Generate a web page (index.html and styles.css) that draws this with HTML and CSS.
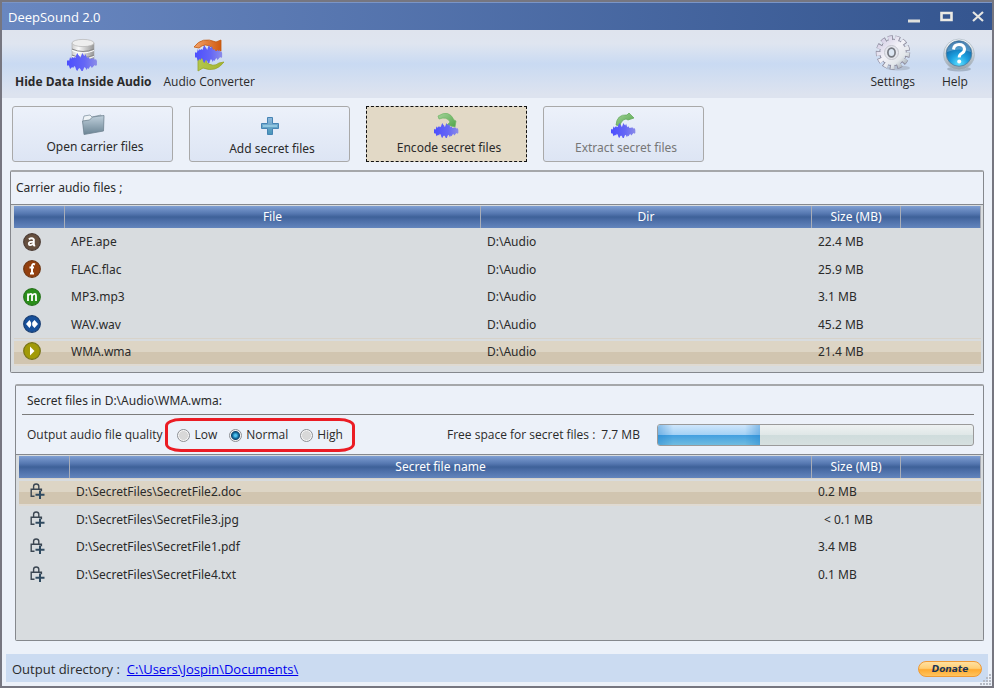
FILE: index.html
```html
<!DOCTYPE html>
<html lang="en">
<head>
<meta charset="utf-8">
<title>DeepSound 2.0</title>
<link rel="stylesheet" href="styles.css">
</head>
<body>
<svg class="defs" width="0" height="0" aria-hidden="true">
  <defs>
    <linearGradient id="gWave"><stop offset="0" stop-color="#4a4dff"/><stop offset=".6" stop-color="#6567f5"/><stop offset="1" stop-color="#8b8ce8"/></linearGradient>
    <linearGradient id="gMetal"><stop offset="0" stop-color="#d0d0d0"/><stop offset=".3" stop-color="#fafafa"/><stop offset="1" stop-color="#969696"/></linearGradient>
    <linearGradient id="gOrange"><stop offset="0" stop-color="#f3a269"/><stop offset="1" stop-color="#d05a10"/></linearGradient>
    <linearGradient id="gLime"><stop offset="0" stop-color="#b2c64d"/><stop offset="1" stop-color="#a5b52c"/></linearGradient>
    <linearGradient id="gGreen" x1="0" y1="0" x2="1" y2="1"><stop offset="0" stop-color="#a5d39a"/><stop offset="1" stop-color="#4fa548"/></linearGradient>
    <linearGradient id="gFolder" x1="0" y1="0" x2="0" y2="1"><stop offset="0" stop-color="#c0d0dc"/><stop offset="1" stop-color="#6b8494"/></linearGradient>
    <linearGradient id="gGear" gradientUnits="userSpaceOnUse" x1="4" y1="4" x2="30" y2="34"><stop offset="0" stop-color="#cfc8e2"/><stop offset=".45" stop-color="#f3f2f8"/><stop offset=".75" stop-color="#e2e6ea"/><stop offset="1" stop-color="#98a2ab"/></linearGradient>
    <linearGradient id="gRing" x1="0" y1="0" x2="0" y2="1"><stop offset="0" stop-color="#ffffff"/><stop offset="1" stop-color="#93a0ab"/></linearGradient>
    <linearGradient id="gPlus" x1="0" y1="0" x2="0" y2="1"><stop offset="0" stop-color="#8fb8dc"/><stop offset="1" stop-color="#4795b8"/></linearGradient>
    <radialGradient id="gHelp" cx=".5" cy=".9" r=".8"><stop offset="0" stop-color="#5fe0ff"/><stop offset=".45" stop-color="#1ba0e0"/><stop offset="1" stop-color="#115c9c"/></radialGradient>
    <symbol id="wave" viewBox="0 0 31 18" preserveAspectRatio="none"><path fill="url(#gWave)" d="M0 8l1-1 1 1 1-4 1 2 1-2 1 1 1-1 1 1 1-3 1-2 1 2 1 1 1 2 1-3 1-2 1 2 1 1 1-2 1 3 1 1 1-1 1 2 1 0 1-1 1 1 1-1 1 2 1-1 1 2v4l-1 1-1-1-1 1-1 1-1 1-1-2-1 1-1 2-1-1-1 2-1-2-1-1-1 2-1 3-1-1-1-2-1-1-1 1-1 2-1-1-1-3-1-1-1 2-1-1-1 1-1 1-1-3-1-1-1 1-1-2z"/></symbol>
    <symbol id="lock" viewBox="0 0 15 17"><path fill="none" stroke="#3b4652" stroke-width="1.4" d="M4.500 13.300H1.200V6.200h10.200v2M3.600 6V3.200Q3.600 1 6.200 1T8.800 3.200V6"/><path stroke="#2f4a60" stroke-width="2" d="M10 7.500v8.500M5.500 11.700h9"/></symbol>
  </defs>
</svg>
<div class="window">
  <header class="titlebar">
    <h1 class="title">DeepSound 2.0</h1>
    <div class="controls">
      <button class="ctl" aria-label="Minimize"><svg width="14" height="14"><path d="M1 11h12" stroke="#dfe0dc" stroke-width="3"/></svg></button>
      <button class="ctl" aria-label="Maximize"><svg width="14" height="14"><path d="M2.500 3h10v7h-10z" fill="none" stroke="#eceae4" stroke-width="2.600"/></svg></button>
      <button class="ctl" aria-label="Close"><svg width="14" height="14"><path d="M2 2l10 9M12 2L2 11" stroke="#e6e6e2" stroke-width="2.200"/></svg></button>
    </div>
  </header>

  <nav class="toolbar">
    <button class="tool current">
      <svg width="32" height="34" viewBox="0 0 32 34"><path fill="url(#gMetal)" stroke="#aaa" stroke-width=".6" d="M5 5v20q11 5 22 0V5z"/><ellipse cx="16" cy="5" rx="11" ry="3.600" fill="#eee" stroke="#b5b5b5" stroke-width=".7"/><path fill="none" stroke="#8a8a8a" d="M5 11q11 5 22 0M5 17q11 5 22 0"/><path fill="none" stroke="#fff" d="M5 12.500q11 5 22 0M5 18.500q11 5 22 0"/><use href="#wave" x="0" y="15" width="32" height="18"/></svg>
      <span>Hide Data Inside Audio</span>
    </button>
    <button class="tool">
      <svg width="32" height="34" viewBox="0 0 32 34"><path fill="url(#gOrange)" stroke="#c2590f" stroke-width=".8" d="M1 9Q9-2 23 4l5-2v11H17l3-3Q12 4 6 10z"/><path fill="url(#gLime)" stroke="#97a52c" stroke-width=".8" d="M31 24Q23 35 10 30l-5 3V20h11l-3 4q7 6 13 1z"/><use href="#wave" x="2" y="7" width="29" height="18"/></svg>
      <span>Audio Converter</span>
    </button>
    <span class="spacer"></span>
    <button class="tool">
      <svg width="36" height="38" viewBox="0 0 36 38"><ellipse cx="23" cy="34" rx="12" ry="2.500" fill="#a8b4c4" opacity=".7"/><circle cx="18" cy="18.500" r="14.200" fill="none" stroke="#8e8c9e" stroke-width="6" stroke-dasharray="4.600 2.263"/><circle cx="18" cy="18.500" r="13.400" fill="none" stroke="#8e8c9e" stroke-width="1"/><circle cx="18" cy="18.500" r="13.600" fill="none" stroke="url(#gGear)" stroke-width="6" stroke-dasharray="3.600 2.973"/><circle cx="18" cy="18.500" r="12.500" fill="url(#gGear)"/><circle cx="16.500" cy="18.500" r="7" fill="#e6e7ee" stroke="#c4c5ce"/><ellipse cx="16.500" cy="18.500" rx="3.600" ry="4.400" fill="#dce6f3" stroke="#777a82" stroke-width="1.700"/></svg>
      <span>Settings</span>
    </button>
    <button class="tool help">
      <svg width="34" height="34" viewBox="0 0 34 34"><ellipse cx="17" cy="31" rx="12" ry="2.500" fill="#8898a8" opacity=".6"/><circle cx="17" cy="16.500" r="15.500" fill="url(#gRing)" stroke="#b0bdc8" stroke-width=".8"/><circle cx="17" cy="15.500" r="12.800" fill="url(#gHelp)" stroke="#567d9c" stroke-width=".8"/><path d="M5 14Q6 4 17 3.500T29 14Q17 9 5 14" fill="#fff" opacity=".25"/><path d="M11.500 11.500Q12 6.500 17 6.500T22.500 11q0 3-3 4.500-2.300 1.200-2.300 4" fill="none" stroke="#fff" stroke-width="3"/><circle cx="17.200" cy="23.500" r="2" fill="#fff"/></svg>
      <span>Help</span>
    </button>
  </nav>

  <div class="actions">
    <button class="action">
      <svg width="24" height="24" viewBox="0 0 24 24"><path fill="#eef3f6" stroke="#8596a3" stroke-width=".8" d="M2 7l1-4 6-1 2 2 9-2 1 4-4 10H3z"/><path fill="url(#gFolder)" stroke="#6f8390" stroke-width=".8" d="M1.500 8l7-1 3-3L23 2.500 22.500 18 3 21.500z"/></svg>
      <span>Open carrier files</span>
    </button>
    <button class="action add">
      <svg width="24" height="24" viewBox="0 0 24 24"><path fill="url(#gPlus)" stroke="#4584b4" d="M9.500 2.500h5v6h6v5h-6v6h-5v-6h-6v-5h6z"/><path stroke="#9cd2e8" stroke-width="1.500" d="M5 11h14"/></svg>
      <span>Add secret files</span>
    </button>
    <button class="action active">
      <svg width="26" height="26" viewBox="0 0 26 26"><path fill="url(#gGreen)" stroke="#6db464" stroke-width=".7" d="M4 4Q15-3 20 8l2 1-1 6-8-2 3-3Q13 4 5 7z"/><use href="#wave" x="0" y="11" width="26" height="15"/></svg>
      <span>Encode secret files</span>
    </button>
    <button class="action" disabled>
      <svg width="26" height="26" viewBox="0 0 26 26"><path fill="url(#gGreen)" stroke="#5ba553" stroke-width=".7" d="M5 13Q6 2 16 3l2-2 5 5-6 2-2-1Q10 8 9 14z"/><use href="#wave" x="0" y="11" width="26" height="15"/></svg>
      <span>Extract secret files</span>
    </button>
  </div>

  <section class="panel carriers">
    <h2 class="caption">Carrier audio files ;</h2>
    <div class="list">
      <table>
        <colgroup><col class="c-icon"><col><col class="c-dir"><col class="c-size"><col class="c-end"></colgroup>
        <thead><tr><th></th><th>File</th><th>Dir</th><th>Size (MB)</th><th></th></tr></thead>
        <tbody>
          <tr><td><svg width="18" height="18"><circle cx="9" cy="9" r="8.300" fill="#66503f" stroke="#4b3b33" stroke-width="1.200"/><path d="M5.800 6.300q3-2 5 0V12q.2.700 1.400.4M10.500 8.600Q5.500 8.500 5.800 11t5-.5" fill="none" stroke="#fff" stroke-width="1.900"/></svg></td><td>APE.ape</td><td>D:\Audio</td><td>22.4 MB</td><td></td></tr>
          <tr><td><svg width="18" height="18"><circle cx="9" cy="9" r="8.300" fill="#93400f" stroke="#6e3511" stroke-width="1.200"/><path d="M12 4.500Q9 3 9 6.500V14M6.500 7.500h4.500M7 13.500h4" fill="none" stroke="#fff" stroke-width="2"/></svg></td><td>FLAC.flac</td><td>D:\Audio</td><td>25.9 MB</td><td></td></tr>
          <tr><td><svg width="18" height="18"><circle cx="9" cy="9" r="8.300" fill="#2b8f1a" stroke="#247219" stroke-width="1.200"/><path d="M5 13V5.500M5 7.500Q9 4 9 8v5M9 7.500Q13 4 13 8v5" fill="none" stroke="#fff" stroke-width="1.800"/></svg></td><td>MP3.mp3</td><td>D:\Audio</td><td>3.1 MB</td><td></td></tr>
          <tr><td><svg width="18" height="18"><circle cx="9" cy="9" r="8.300" fill="#17509a" stroke="#173c70" stroke-width="1.200"/><path d="M3 9l3.500-4 2 3.200L11.500 5 15 9l-3.500 4-3-3.200L6.500 13z" fill="#fff"/><path d="M8.700 7v4" stroke="#17509a"/></svg></td><td>WAV.wav</td><td>D:\Audio</td><td>45.2 MB</td><td></td></tr>
          <tr class="selected"><td><svg width="18" height="18"><circle cx="9" cy="9" r="8.300" fill="#a29a08" stroke="#767316" stroke-width="1.200"/><path d="M7 4.500l4.500 4.500L7 13.500z" fill="#fff"/></svg></td><td>WMA.wma</td><td>D:\Audio</td><td>21.4 MB</td><td></td></tr>
        </tbody>
      </table>
    </div>
  </section>

  <section class="panel secrets">
    <h2 class="caption">Secret files in D:\Audio\WMA.wma:</h2>
    <div class="options">
      <span id="quality">Output audio file quality</span>
      <div class="choices" role="radiogroup" aria-labelledby="quality">
        <label><input type="radio" name="quality"> Low</label>
        <label><input type="radio" name="quality" checked> Normal</label>
        <label><input type="radio" name="quality"> High</label>
      </div>
      <span class="free">Free space for secret files :</span>
      <span class="amount">7.7 MB</span>
      <div class="meter" role="progressbar" aria-label="Free space for secret files" aria-valuenow="32" aria-valuemin="0" aria-valuemax="100"><div class="fill" style="width:32.5%"></div></div>
    </div>
    <div class="list">
      <table>
        <colgroup><col class="c-icon"><col><col class="c-size"><col class="c-end"></colgroup>
        <thead><tr><th></th><th>Secret file name</th><th>Size (MB)</th><th></th></tr></thead>
        <tbody>
          <tr class="selected"><td><svg width="15" height="17"><use href="#lock"/></svg></td><td>D:\SecretFiles\SecretFile2.doc</td><td>0.2 MB</td><td></td></tr>
          <tr><td><svg width="15" height="17"><use href="#lock"/></svg></td><td>D:\SecretFiles\SecretFile3.jpg</td><td class="less">&lt; 0.1 MB</td><td></td></tr>
          <tr><td><svg width="15" height="17"><use href="#lock"/></svg></td><td>D:\SecretFiles\SecretFile1.pdf</td><td>3.4 MB</td><td></td></tr>
          <tr><td><svg width="15" height="17"><use href="#lock"/></svg></td><td>D:\SecretFiles\SecretFile4.txt</td><td>0.1 MB</td><td></td></tr>
        </tbody>
      </table>
    </div>
  </section>

  <footer class="status">
    <span>Output directory :</span>
    <a href="#">C:\Users\Jospin\Documents\</a>
    <button class="donate">Donate</button>
  </footer>
  <svg class="grip" width="12" height="12" aria-hidden="true"><path d="M10 0v12M7 3v9M4 6v6M1 9v3" stroke="#b5bac4" stroke-width="2" stroke-dasharray="2 1"/></svg>
</div>
</body>
</html>
```

FILE: styles.css
```css
* { box-sizing: border-box; }

body {
  margin: 0;
  font: 12px/16px "Open Sans", "Noto Sans", sans-serif;
  color: #2a2a2a;
}

button {
  font: inherit;
  color: inherit;
  padding: 0;
  border: 0;
  background: none;
}

svg { display: block; flex: none; }
.defs { position: absolute; }

.window {
  position: relative;
  display: flex;
  flex-direction: column;
  min-height: 100vh;
  border: 2px solid #767680;
  background: #ecf1f9;
}

/* Title bar */
.titlebar {
  display: flex;
  align-items: center;
  justify-content: space-between;
  height: 28px;
  padding: 0 7px 0 6px;
  border-top: 1px solid #7b95c6;
  background: linear-gradient(90deg, #6987c0, #34558f);
  color: #fff;
}
.title { margin: 0; font-size: 13px; font-weight: 400; }
.controls { display: flex; gap: 18px; }

/* Toolbar */
.toolbar {
  display: flex;
  align-items: flex-end;
  height: 68px;
  padding: 0 16px 8px 13px;
  gap: 12px;
  background: linear-gradient(#dfe4ee, #dfe5f0 20%, #c9daf2 50%, #dde3ef 95%);
}
.tool {
  display: flex;
  flex-direction: column;
  align-items: center;
  gap: 2px;
}
.current { font-weight: 700; }
.spacer { flex: 1; }
.help { align-items: flex-start; margin-left: 15px; }

/* Action buttons */
.actions { display: flex; gap: 16px; padding: 8px 10px; }
.action {
  display: flex;
  flex-direction: column;
  align-items: center;
  justify-content: center;
  width: 161px;
  height: 56px;
  font-family: "Noto Sans", sans-serif;
  border: 1px solid #a9a9a9;
  border-radius: 3px;
  background: linear-gradient(#ecf1fa, #dde5f4);
  gap: 2px;
}
.action span { padding-left: 5px; }
.add { padding-top: 4px; }
.active {
  border: 1px dashed #111;
  border-radius: 0;
  background: #e2d9c6;
}
.action:disabled { color: #777; }

/* Panels */
.panel {
  display: flex;
  flex-direction: column;
  border: 1px solid #85888d;
  border-top: 2px solid #a5a7aa;
  border-radius: 2px;
}
.carriers { margin: 0 8px 11px; }
.secrets { flex: 1; margin: 0 8px 13px 13px; }
.caption { margin: 0; font: 400 12px/16px "Noto Sans", sans-serif; }
.carriers .caption { padding: 8px 5px; }
.secrets .caption {
  margin: 0 9px 0 6px;
  padding: 7px 5px 5px;
  border-bottom: 1px solid #7c7c7c;
}
.list {
  flex: 1;
  padding: 1px 2px 6px 3px;
  border-top: 1px solid #85888d;
  background: #d8dcdf;
}

table {
  width: 100%;
  table-layout: fixed;
  border-collapse: separate;
  border-spacing: 0;
  font-family: "Noto Sans", sans-serif;
}
.c-icon { width: 51px; }
.c-dir { width: 331px; }
.c-size { width: 89px; }
.c-end { width: 80px; }
th {
  height: 22px;
  padding: 0;
  font-weight: 400;
  color: #fff;
  border-right: 1px solid #a8adb8;
  background: linear-gradient(#7f9fd3, #5577b0 35%, #3e6199 50%, #4b6da6 65%, #6385bd);
}
td { height: 28px; padding: 0 6px; }
tr:nth-child(even) td { height: 27px; }
td:first-child { padding-left: 9px; padding-bottom: 1px; }
.secrets td:first-child { padding-left: 11px; }
.secrets .less { padding-left: 12px; }
.selected td {
  background: linear-gradient(#ddd5c5 50%, #d1c5b0 50%) 0 2px / 100% 23px no-repeat;
  border-top: 1px solid #d8d3ca;
  border-bottom: 2px solid #dfdad2;
}

/* Quality and space */
.options { display: flex; align-items: center; height: 39px; padding: 1px 9px 0 11px; }
.choices {
  display: flex;
  align-items: center;
  gap: 12px;
  height: 34px;
  margin-left: 3px;
  padding: 0 9px;
  border: 3px solid #eb1c24;
  border-radius: 16px / 8px;
}
.choices label { display: flex; align-items: center; gap: 4px; }
.choices input {
  appearance: none;
  width: 13px;
  height: 13px;
  margin: 0;
  border: 1px solid #8c8f94;
  border-radius: 50%;
  background: radial-gradient(#d8d8d8 55%, #f6f6f6 60%);
}
.choices input:checked {
  background: radial-gradient(circle at 50% 50%, #4fc3ee 0 1px, #126a9c 3px, #12466d 4px, #f3f3f3 5px);
}
.free { margin-left: 92px; }
.amount { margin-left: 6px; }
.meter {
  flex: 1;
  height: 22px;
  margin-left: 17px;
  border: 1px solid #9a9a9a;
  border-radius: 3px;
  background: linear-gradient(#eef2f2, #dfe7e7 50%, #cfdcdc 50%, #d6e0e0);
  overflow: hidden;
}
.fill {
  height: 100%;
  background:
    linear-gradient(90deg, #1c7fcc66, #1c7fcc00 15%, #1c7fcc00 85%, #1c7fcc66),
    linear-gradient(#cfe6fb, #a3d1f5 50%, #429fe0 50%, #70bce0);
}

/* Status bar */
.status {
  display: flex;
  align-items: center;
  gap: 7px;
  height: 28px;
  margin: 0 4px 4px;
  padding: 2px 6px 0;
  font-size: 13px;
  font-weight: 500;
  background: #cbdbf1;
}
.status a { color: #00e; }
.donate {
  margin-left: auto;
  width: 64px;
  height: 16px;
  border: 1px solid #f09a35;
  border-radius: 8px;
  font: italic 700 9px/12px "DejaVu Sans", sans-serif;
  color: #1c3556;
  background: linear-gradient(#ffe0a0, #ffcf75 45%, #ffaa30 55%, #ffc45e);
}
.grip { position: absolute; right: 0; bottom: 0; }
```
